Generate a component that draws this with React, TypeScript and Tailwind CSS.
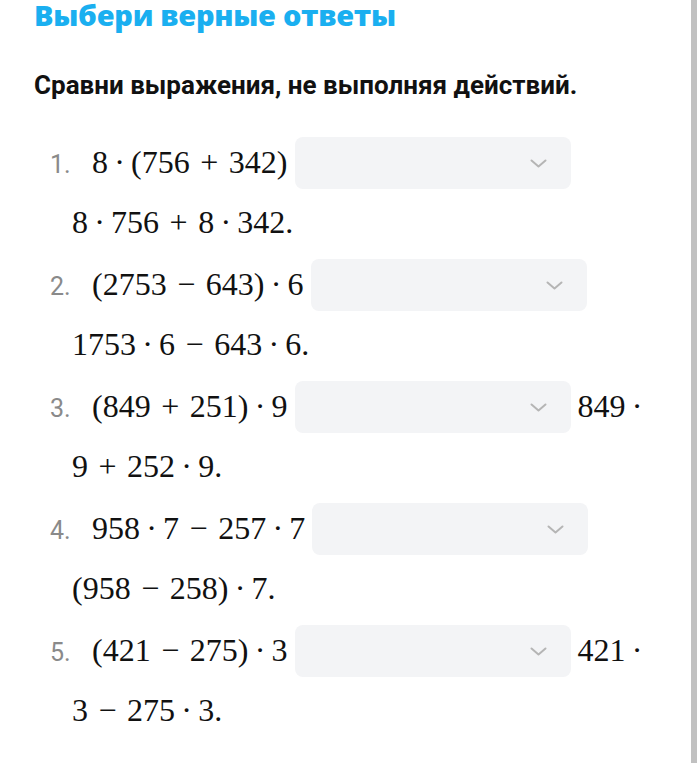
import React from "react";

type Item = { first: string; after?: string; second: string };

const items: Item[] = [
  { first: "8 · (756 + 342)", second: "8 · 756 + 8 · 342." },
  { first: "(2753 − 643) · 6", second: "1753 · 6 − 643 · 6." },
  { first: "(849 + 251) · 9", after: "849 ·", second: "9 + 252 · 9." },
  { first: "958 · 7 − 257 · 7", second: "(958 − 258) · 7." },
  { first: "(421 − 275) · 3", after: "421 ·", second: "3 − 275 · 3." },
];

const Math = ({ expr }: { expr: string }) => {
  const parts = expr.split(" ");
  return (
    <span>
      {parts.map((p, i) => {
        if (p === "+" || p === "−")
          return (
            <span key={i} className="inline-block w-[1.222em] text-center">
              {p}
            </span>
          );
        if (p === "·")
          return (
            <span key={i} className="inline-block w-[0.722em] text-center">
              ·
            </span>
          );
        return <span key={i}>{p}</span>;
      })}
    </span>
  );
};

const Select = () => (
  <span className="mx-[7px] inline-block h-[52px] w-[276px] overflow-hidden rounded-lg bg-[#f3f4f6] align-[-16px]">
    <span className="flex h-full items-center justify-end pr-[24px]">
      <svg width="17" height="9" viewBox="0 0 17 9" fill="none">
        <polyline
          points="1.5,1.5 8.5,7.5 15.5,1.5"
          stroke="#b5b5b5"
          strokeWidth="2"
          strokeLinecap="round"
          strokeLinejoin="round"
        />
      </svg>
    </span>
  </span>
);

export default function App() {
  return (
    <div className="flex h-[763px] w-full overflow-hidden bg-white">
      <div className="flex-1 pl-[34px]">
        <h1 className="text-[29px] font-extrabold leading-[30px] tracking-[-0.3px] text-[#1aaff0] [font-family:'Open_Sans',sans-serif]">
          Выбери верные ответы
        </h1>
        <p className="mt-[40px] text-[26px] font-bold leading-[30px] text-[#111] [font-family:Roboto,sans-serif]">
          Сравни выражения, не выполняя действий.
        </p>
        <ol className="mt-[32px] pl-[38px] text-[32px] leading-[60px] text-[#111] [font-family:'Liberation_Serif',serif]">
          {items.map((it, i) => (
            <li key={i} className="mb-[2px] whitespace-nowrap">
              <span className="-ml-[22px] inline-block w-[42px] text-[25px] leading-none text-[#8a8a8a] [font-family:Roboto,sans-serif]">
                {i + 1}.
              </span>
              <Math expr={it.first} />
              <Select />
              {it.after && <Math expr={it.after} />}
              <br />
              <Math expr={it.second} />
            </li>
          ))}
        </ol>
      </div>
      <div className="h-full w-[6px] bg-[#c1c1c1]" />
    </div>
  );
}
